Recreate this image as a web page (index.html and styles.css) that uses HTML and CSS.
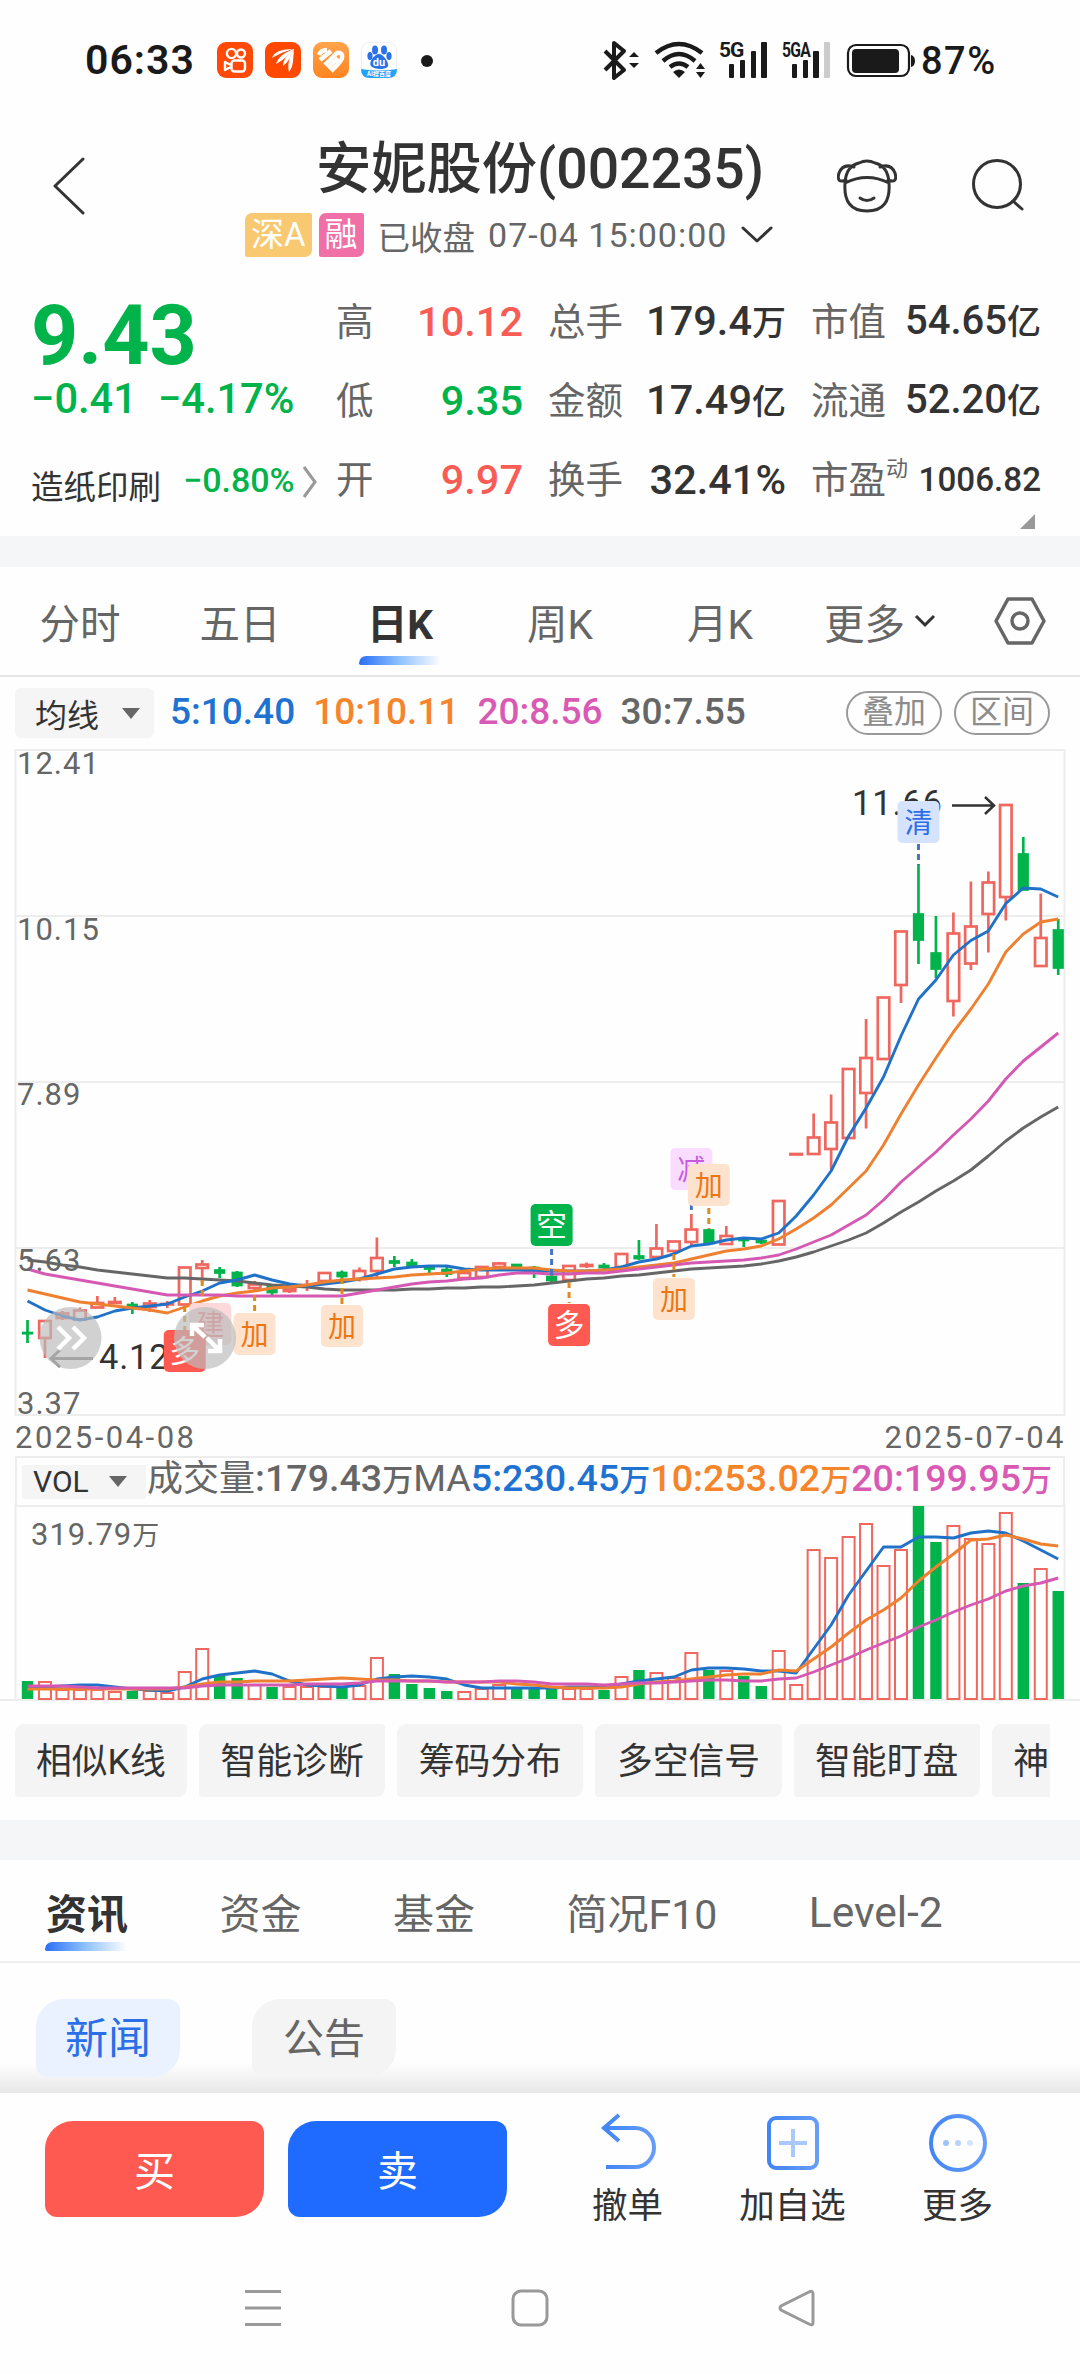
FILE: index.html
```html
<!DOCTYPE html>
<html lang="zh-CN">
<head>
    <meta charset="UTF-8">
    <meta name="viewport" content="width=device-width, initial-scale=1.0">
    <title>安妮股份(002235)</title>
    <link rel="stylesheet" href="styles.css">
</head>
<body>
    <div class="statusbar">
        <span class="time">06:33</span>
        <svg class="app" viewBox="0 0 36 36"><rect width="36" height="36" rx="9" fill="#ff4906"/><g fill="none" stroke="#fff" stroke-width="2.4"><circle cx="14.500" cy="11.500" r="4.600"/><circle cx="24" cy="11.500" r="4"/><rect x="14.500" y="18.500" width="13.500" height="11" rx="3"/><path d="M14 23l-6-3v8l6-3z" stroke-linejoin="round"/></g></svg>
        <svg class="app" viewBox="0 0 36 36"><rect width="36" height="36" rx="9" fill="#ff4800"/><g fill="#fff"><path d="M7 16C9 10 16 7 29 7C20 9 14 12 7 16z"/><path d="M11 22C13 15 20 10 29 7C23 13 20 17 11 22z"/><path d="M18 24C18 17 24 11 29 7C25 14 25 19 18 24z"/><path d="M24 30C22 22 25 13 29 7C28 15 29 24 24 30z"/></g></svg>
        <svg class="app" viewBox="0 0 36 36"><defs><linearGradient id="heart" x2="0" y2="1"><stop stop-color="#ffa44c"/><stop offset="1" stop-color="#ff8420"/></linearGradient></defs><rect width="36" height="36" rx="9" fill="url(#heart)"/><g fill="none" stroke="#fff" stroke-width="4.500"><path d="M6 13q2-5 8-5"/><path d="M7 18L18 9"/><path d="M12 23L24 11q6-1 5 5q-1 4-11 13"/><path d="M15 26l10-10"/></g></svg>
        <svg class="app" viewBox="0 0 36 36"><rect x=".5" y=".5" width="35" height="35" rx="8" fill="#fff" stroke="#eee"/><g fill="#2972e8"><ellipse cx="14" cy="8" rx="3" ry="4.500"/><ellipse cx="23" cy="8" rx="3" ry="4.500"/><ellipse cx="9" cy="14" rx="2.600" ry="4"/><ellipse cx="28" cy="14" rx="2.600" ry="4"/><path d="M18 12c4 0 10 8 9 12s-14 4-17 0s4-12 8-12z"/></g><path d="M0 27q18 3 36 0q0 9-9 9H9q-9 0-9-9z" fill="#21a2fb"/><text x="18" y="24" class="du">du</text><text x="18" y="34" class="ai">AI搜百度</text></svg>
        <i class="dot"></i>
        <svg class="signals" viewBox="600 30 410 60" width="410" height="60">
            <path d="M605 51l19 19-10 8V43l10 8-19 19" class="line"/>
            <path d="M629 57l5-5 5 5zM629 63l5 5 5-5zM696 69l4.500-6 4.500 6zM696 72l4.500 6 4.500-6z"/>
            <g class="arc"><path d="M656 53q23-18 46 0"/><path d="M663 61q16-14 32 0"/><path d="M670 67q9-7 18 0"/></g>
            <path d="M673 72q6-5 12 0l-6 6z"/>
            <text x="719" y="57" class="net">5G</text><text x="782" y="57" class="net" textLength="28" lengthAdjust="spacingAndGlyphs">5GA</text>
            <rect x="729" y="64" width="5" height="14" rx="1"/><rect x="740" y="60" width="5" height="18" rx="1"/><rect x="751" y="51" width="5" height="27" rx="1"/><rect x="761" y="42" width="6" height="36" rx="1"/>
            <rect x="792" y="64" width="5" height="14" rx="1"/><rect x="803" y="60" width="5" height="18" rx="1"/><rect x="813" y="51" width="6" height="27" rx="1"/><rect x="824" y="42" width="6" height="36" rx="1" fill="#ccc"/>
            <rect x="848" y="45" width="61" height="31" rx="8" fill="none" stroke="#1a1a1a" stroke-width="2.200"/><rect x="852" y="49" width="47" height="24" rx="4"/><path d="M911 55q4 1 4 6t-4 6z"/>
            <text x="921" y="74" class="percent">87%</text>
        </svg>
    </div>

    <div class="header">
        <svg class="back" width="32" height="58" viewBox="0 0 32 58"><path d="M30 2L2 29l28 27"/></svg>
        <div class="heading">
            <h1>安妮股份(002235)</h1>
            <div class="subtitle">
                <span class="badge">深A</span><span class="badge pink">融</span>
                <span class="closed">已收盘</span><span class="stamp">07-04 15:00:00</span>
                <svg width="32" height="18" viewBox="0 0 32 18"><path d="M2 2l14 13L30 2"/></svg>
            </div>
        </div>
        <div class="actions">
            <svg width="60" height="56" viewBox="0 0 60 56"><path d="M8 25Q30 14 52 25Q54 53 30 53Q6 53 8 25zM8 25Q9 8 22 5Q30 1 38 5Q51 8 52 25M9 22Q-1 26 2 15Q6 5 17 9M51 22Q61 26 58 15Q54 5 43 9M23 40q7 5 14 0"/></svg>
            <svg width="54" height="54" viewBox="0 0 54 54"><circle cx="26" cy="26" r="23.500"/><path d="M42 43l9 8"/></svg>
        </div>
    </div>

    <div class="quote">
        <div class="now">
            <div class="price">9.43</div>
            <div class="change"><span>−0.41</span><span>−4.17%</span></div>
            <div class="sector">造纸印刷 <span>−0.80%</span><svg width="16" height="34" viewBox="0 0 16 34"><path d="M2 2l11 15L2 32"/></svg></div>
        </div>
        <dl class="stats">
            <dt>高</dt><dd class="up">10.12</dd><dt>总手</dt><dd>179.4<small>万</small></dd><dt>市值</dt><dd class="cap">54.65<small>亿</small></dd>
            <dt>低</dt><dd class="down">9.35</dd><dt>金额</dt><dd>17.49<small>亿</small></dd><dt>流通</dt><dd class="cap">52.20<small>亿</small></dd>
            <dt>开</dt><dd class="up">9.97</dd><dt>换手</dt><dd>32.41%</dd><dt>市盈<sup>动</sup></dt><dd class="long">1006.82</dd>
        </dl>
        <i class="corner"></i>
    </div>

    <div class="periods">
        <span>分时</span><span>五日</span><span class="active">日K</span><span>周K</span><span>月K</span>
        <span class="more">更多<svg width="22" height="14" viewBox="0 0 22 14"><path d="M2 2l9 9 9-9"/></svg></span>
        <svg class="settings" width="52" height="48" viewBox="0 0 52 48"><path d="M14 2h24l12 22-12 22H14L2 24z"/><circle cx="26" cy="24" r="8"/></svg>
    </div>

    <div class="averages">
        <span class="select">均线<i></i></span>
        <span class="blue">5:10.40</span><span class="orange">10:10.11</span><span class="violet">20:8.56</span><span class="gray">30:7.55</span>
        <span class="pill">叠加</span><span class="pill">区间</span>
    </div>

    <svg id="kline" class="chart" viewBox="0 749 1080 667" width="1080" height="667"></svg>
    <div class="dates"><span>2025-04-08</span><span>2025-07-04</span></div>
    <div class="volume-info">
        <span class="select">VOL<i></i></span>
        <span class="gray"><b>成交量</b>:179.43<small>万</small><em>MA</em></span><span class="blue">5:230.45<small>万</small></span><span class="orange">10:253.02<small>万</small></span><span class="violet">20:199.95<small>万</small></span>
    </div>
    <svg id="volume" class="chart" viewBox="0 1505 1080 196" width="1080" height="196"></svg>

    <div class="tools">
        <span>相似K线</span><span>智能诊断</span><span>筹码分布</span><span>多空信号</span><span>智能盯盘</span><span>神奇</span>
    </div>

    <div class="sections">
        <span class="active">资讯</span><span>资金</span><span>基金</span><span>简况F10</span><span class="level">Level-2</span>
    </div>
    <div class="chips"><span class="active">新闻</span><span>公告</span></div>

    <div class="tradebar">
        <button class="buy">买</button><button class="sell">卖</button>
        <div class="action">
            <svg width="60" height="60" viewBox="0 0 60 60"><defs><linearGradient id="ink"><stop stop-color="#4285f4"/><stop offset="1" stop-color="#669df6"/></linearGradient></defs><path d="M21 2L6 15l15 13M6 15h31a19 19.500 0 0 1 0 39H8"/></svg>
            撤单
        </div>
        <div class="action">
            <svg width="60" height="60" viewBox="0 0 60 60"><rect x="6" y="5" width="48" height="50" rx="7"/><path class="pale" d="M16 30H44M30 16V44"/></svg>
            加自选
        </div>
        <div class="action">
            <svg width="60" height="60" viewBox="0 0 60 60"><circle cx="30" cy="30" r="27"/><g class="dots"><circle cx="18" cy="30" r="3" fill="#9fc1fa"/><circle cx="30" cy="30" r="3" fill="#b9d2fc"/><circle cx="42" cy="30" r="3" fill="#d5e4fd"/></g></svg>
            更多
        </div>
    </div>

    <div class="navbar">
        <svg width="38" height="38" viewBox="0 0 38 38"><path d="M1 2.500h36M1 19h36M1 35.500h36"/></svg>
        <svg width="38" height="38" viewBox="0 0 38 38"><rect x="2" y="2" width="34" height="34" rx="8"/></svg>
        <svg width="38" height="38" viewBox="0 0 38 38"><path d="M31 3L3 17q-2 2 0 4l28 14q4 2 4-1V5q0-4-4-2z"/></svg>
    </div>

    <script src="chart.js"></script>
</body>
</html>
```
FILE: styles.css
```css
* {
    box-sizing: border-box;
}
body {
    margin: 0;
    width: 1080px;
    height: 2374px;
    overflow: hidden;
    background: #fefefe;
    color: #333;
    font-family: Roboto, "Noto Sans CJK SC", sans-serif;
}
svg {
    display: block;
    flex: none;
}
i {
    display: block;
    flex: none;
}

/* status bar */
.statusbar {
    display: flex;
    align-items: center;
    height: 120px;
    padding-left: 85px;
    color: #1a1a1a;
}
.time {
    width: 132px;
    font-size: 41px;
    font-weight: 600;
    letter-spacing: 1px;
}
.app {
    width: 36px;
    height: 36px;
    margin-right: 12px;
}
.du {
    font: bold 11px Roboto;
    fill: #fff;
    text-anchor: middle;
}
.ai {
    font: bold 6px "Noto Sans CJK SC";
    fill: #fff;
    text-anchor: middle;
}
.dot {
    width: 12px;
    height: 12px;
    margin: 2px 167px 0 12px;
    border-radius: 50%;
    background: #1a1a1a;
}
.signals {
    fill: #1a1a1a;
}
.signals .line {
    fill: none;
    stroke: #1a1a1a;
    stroke-width: 4;
    stroke-linejoin: round;
}
.arc {
    fill: none;
    stroke: #1a1a1a;
    stroke-width: 4.500;
}
.net {
    font: bold 21px Roboto;
    letter-spacing: -1px;
}
.percent {
    font: 500 38px Roboto;
    letter-spacing: 1.500px;
}

/* header */
.header {
    display: grid;
    grid-template-columns: 242px 596px 242px;
    height: 158px;
}
.header svg {
    fill: none;
    stroke: #333;
    stroke-width: 3;
    stroke-linecap: round;
    stroke-linejoin: round;
}
.back {
    margin: 37px 0 0 53px;
}
.heading {
    display: flex;
    flex-direction: column;
    align-items: center;
}
h1 {
    margin: 14px 0 0;
    font-size: 55.300px;
    font-weight: 500;
    line-height: 72px;
}
.subtitle {
    display: flex;
    align-items: center;
    align-self: flex-start;
    height: 44px;
    margin: 7px 0 0 3px;
    font-size: 34px;
    color: #666;
    white-space: nowrap;
}
.badge {
    height: 44px;
    margin-right: 7px;
    padding: 0 6px;
    border-radius: 7px 2px 7px 2px;
    background: #f8c970;
    color: #fff;
    font-size: 33px;
    line-height: 44px;
}
.badge.pink {
    margin-right: 14px;
    background: #f06fa6;
}
.closed {
    margin-right: 13px;
    font-size: 32.500px;
}
.stamp {
    margin-right: 14px;
    letter-spacing: 1px;
}
.actions {
    display: flex;
    gap: 74px;
    margin-left: -1px;
    padding: 38px 0 0;
}

/* quote */
.quote {
    position: relative;
    display: flex;
    height: 289px;
    padding-top: 4px;
    border-bottom: 31px solid #f5f6f8;
    color: #00b34a;
}
.now {
    width: 336px;
    padding-left: 31px;
}
.price {
    margin-top: 5px;
    font-size: 82.500px;
    font-weight: 700;
    line-height: 98px;
}
.change {
    display: flex;
    gap: 21px;
    margin-top: -11px;
    font-size: 41.600px;
    font-weight: 500;
    line-height: 50px;
}
.sector {
    display: flex;
    align-items: center;
    height: 60px;
    margin-top: 30px;
    color: #333;
    font-size: 32.500px;
    white-space: nowrap;
}
.sector span {
    margin: -8px 7px 0 22px;
    color: #00b34a;
    font-size: 34px;
    font-weight: 500;
}
.sector svg {
    margin-top: -5px;
    fill: none;
    stroke: #999;
    stroke-width: 3;
}
.stats {
    display: grid;
    grid-template-columns: 62px 125px 100px 163px 102px 153px;
    grid-auto-rows: 79px;
    align-items: center;
    margin: 0;
    white-space: nowrap;
}
dt {
    color: #666;
    font-size: 37.500px;
    line-height: 60px;
}
dt:nth-of-type(3n+2), dt:nth-of-type(3n) {
    padding-left: 25px;
}
dd {
    margin: 0;
    color: #333;
    font-size: 41.500px;
    font-weight: 500;
    line-height: 60px;
    text-align: right;
}
dd small {
    font-size: 34px;
}
dt sup {
    font-size: 22px;
    line-height: 0;
    vertical-align: 17px;
}
.cap {
    font-size: 40px;
}
.long {
    font-size: 33.200px;
}
.up {
    color: #f95b55;
}
.down {
    color: #00b34a;
}
.corner {
    position: absolute;
    right: 45px;
    bottom: 7px;
    border-bottom: 15px solid #999;
    border-left: 15px solid transparent;
}

/* period tabs */
.periods {
    display: flex;
    align-items: center;
    height: 110px;
    border-bottom: 2px solid #e6e6e6;
    color: #666;
    font-size: 40.500px;
}
.periods > span {
    position: relative;
    width: 160px;
    text-align: center;
}
.periods > .more {
    display: flex;
    align-items: center;
    gap: 9px;
    width: 170px;
    padding-left: 24px;
}
.more svg {
    fill: none;
    stroke: #333;
    stroke-width: 3;
}
.settings {
    margin-left: 24px;
    fill: none;
    stroke: #666;
    stroke-width: 3.500;
    stroke-linejoin: round;
}
.periods .active, .sections .active {
    color: #333;
    font-weight: 700;
}
.periods .active::after, .sections .active::after {
    content: "";
    position: absolute;
    bottom: -14px;
    left: 39px;
    width: 82px;
    height: 9px;
    border-radius: 8px 0 0 2px;
    background: linear-gradient(90deg, #2a6ff5, #8fc3ff 50%, #fefefe);
}

/* moving averages */
.averages {
    display: flex;
    align-items: center;
    height: 72px;
    padding-left: 15px;
    font-size: 37px;
    font-weight: 500;
    white-space: nowrap;
}
.averages > span:not(.pill):not(.select) {
    margin: -4px 18px 0 0;
}
.select {
    display: flex;
    flex: none;
    align-items: center;
    justify-content: space-between;
    width: 139px;
    height: 50px;
    margin-right: 16px;
    padding: 0 14px 0 20px;
    border-radius: 6px;
    background: #f5f5f5;
    color: #333;
    font-size: 32px;
    font-weight: 400;
}
.select i {
    border: 9px solid transparent;
    border-top: 11px solid #666;
    border-bottom: 0;
}
.blue {
    color: #2072d2;
}
.orange {
    color: #f5842a;
}
.violet {
    color: #d95ab4;
}
.gray {
    color: #666;
}
.pill {
    width: 96px;
    height: 44px;
    margin-left: 12px;
    border: 2px solid #999;
    border-radius: 22px;
    color: #8c8c8c;
    font-size: 32px;
    font-weight: 400;
    line-height: 39px;
    text-align: center;
}
.gray + .pill {
    margin-left: auto;
}
.pill:last-child {
    margin-right: 30px;
}

/* charts */
.chart .grid {
    fill: none;
    stroke: #ededed;
    stroke-width: 2;
}
.chart .rise {
    fill: #fefefe;
    stroke: #ef675f;
    stroke-width: 2.700;
}
.chart .fall {
    fill: #00b34a;
    stroke: #00b34a;
    stroke-width: 2.700;
}
#volume .rise {
    stroke-width: 2;
}
#volume .fall {
    stroke: none;
}
.chart polyline {
    fill: none;
    stroke-width: 2.900;
    stroke-linejoin: round;
}
.chart .axis {
    fill: #666;
    font-size: 31px;
    letter-spacing: 1px;
}
.chart .extreme {
    fill: #333;
    font-size: 34.500px;
    letter-spacing: .8px;
}
.chart .tag {
    font-size: 28px;
    text-anchor: middle;
}
.chart .unit {
    font-size: 27px;
}
.dates {
    display: flex;
    justify-content: space-between;
    height: 40px;
    padding: 2px 14px 4px 15px;
    color: #666;
    font-size: 31px;
    letter-spacing: 2.500px;
    line-height: 40px;
}
.volume-info {
    display: flex;
    align-items: center;
    height: 49px;
    margin: 0 15px;
    border: 2px solid #ededed;
    border-bottom: 0;
    font-size: 37.600px;
    font-weight: 500;
    line-height: 44px;
    white-space: nowrap;
}
.volume-info > span {
    margin-top: -4px;
}
.volume-info .select {
    width: 124px;
    height: 34px;
    margin: 0 1px 0 5px;
    padding: 0 19px 0 11px;
    border-radius: 0;
    font-size: 30px;
}
.volume-info b {
    font-size: 36px;
    font-weight: 400;
}
.volume-info em {
    font-style: normal;
    font-weight: 400;
}
.volume-info small {
    font-size: 31px;
}

/* tools */
.tools {
    display: flex;
    gap: 12px;
    height: 160px;
    margin-right: 30px;
    padding: 23px 0 0 15px;
    overflow: hidden;
    background: #fefefe;
}
.tools span {
    flex: none;
    height: 73px;
    padding: 0 21.500px;
    border-radius: 9px 4px 9px 4px;
    background: #f4f4f4;
    font-size: 35.800px;
    line-height: 76px;
    white-space: nowrap;
}
.tools span:first-child {
    width: 172px;
    padding: 0 0 0 21px;
}

/* info sections */
.sections {
    display: flex;
    align-items: center;
    gap: 91.500px;
    height: 143px;
    margin-top: -41px;
    padding-left: 46px;
    border-top: 40px solid #f5f6f8;
    border-bottom: 2px solid #eee;
    color: #666;
    font-size: 41px;
}
.sections span {
    position: relative;
    margin-top: 1px;
}
.sections .level {
    margin-top: 4px;
    font-size: 42.500px;
}
.sections .active::after {
    bottom: -10px;
    left: -1px;
}
.chips {
    display: flex;
    gap: 72px;
    height: 130px;
    padding: 36px;
    background: linear-gradient(#fefefe 100px, #e8e8e8);
}
.chips span {
    width: 144px;
    height: 78px;
    border-radius: 28px 12px;
    background: #f4f4f4;
    color: #666;
    font-size: 41px;
    line-height: 81px;
    text-align: center;
}
.chips .active {
    background: #eaf2ff;
    color: #2a6ee8;
    font-size: 43px;
}

/* bottom bars */
.tradebar {
    position: relative;
    display: flex;
    height: 150px;
    padding: 28px 0 0 45px;
    background: #fefefe;
}
button {
    width: 219px;
    height: 96px;
    margin-right: 24px;
    padding: 0 0 2px;
    border: 0;
    border-radius: 28px 12px;
    color: #fff;
    font: 41px Roboto, "Noto Sans CJK SC";
}
.buy {
    background: #ff5a52;
}
.sell {
    margin-right: 38px;
    background: #1f6bff;
}
.action {
    display: flex;
    flex-direction: column;
    align-items: center;
    width: 165px;
    margin-top: -8px;
    font-size: 35.500px;
    line-height: 66px;
    color: #333;
    white-space: nowrap;
}
.action svg {
    fill: none;
    stroke: url(#ink);
    stroke-width: 4;
}
.action .pale {
    stroke: #a9c8fb;
}
.action .dots {
    stroke: none;
}
.navbar {
    display: flex;
    justify-content: space-between;
    padding: 46px 264px 0 244px;
}
.navbar svg {
    fill: none;
    stroke: #999;
    stroke-width: 3;
}
```
FILE: chart.js
```js
// x of the first day and the distance between two days
const START = 27.5;
const STEP = 17.47;
const x = i => START + STEP * i;

// direction, body top, body bottom, high, low
const candles = [
    ['g', 1333, 1333.2, 1320, 1343], ['r', 1321, 1338, 1320, 1358], ['r', 1313.5, 1318, 1311, 1320], ['r', 1310.5, 1319.5, 1307.5, 1320],
    ['r', 1303, 1307.5, 1296, 1308], ['r', 1302, 1303, 1297, 1304], ['g', 1305, 1306.5, 1302, 1314], ['r', 1303.5, 1307, 1300, 1312],
    ['r', 1304, 1304.5, 1301, 1308], ['r', 1267.5, 1304.5, 1267, 1305], ['r', 1264.5, 1268, 1260, 1283], ['g', 1270.5, 1272.5, 1267, 1278],
    ['g', 1273, 1285, 1271, 1287], ['r', 1284.5, 1288, 1281, 1290], ['g', 1286, 1292, 1284, 1295], ['r', 1289, 1291, 1283, 1293],
    ['r', 1285, 1285.5, 1280, 1291], ['r', 1273, 1281, 1272, 1282], ['g', 1273, 1276, 1270.5, 1280], ['r', 1271, 1279, 1267.5, 1281.5],
    ['r', 1258, 1271, 1237.5, 1277], ['g', 1261.5, 1262.5, 1256, 1267], ['g', 1263, 1266, 1259, 1268], ['g', 1267.5, 1268.5, 1265, 1273],
    ['g', 1270, 1273.5, 1267, 1277], ['r', 1273, 1278, 1272, 1279], ['r', 1267, 1277, 1266, 1278], ['r', 1263.5, 1267, 1262, 1268],
    ['g', 1265, 1267, 1264, 1268], ['g', 1268, 1272, 1266, 1278], ['g', 1277, 1280, 1275, 1282], ['r', 1266, 1280, 1265, 1281],
    ['r', 1265, 1266, 1262.5, 1268], ['g', 1266, 1267, 1263, 1270], ['r', 1254, 1267, 1253, 1267], ['g', 1256.5, 1258, 1240, 1260],
    ['r', 1248.5, 1257, 1224, 1258], ['r', 1241.5, 1251, 1241, 1254], ['r', 1229.5, 1242, 1214, 1246], ['g', 1230.5, 1243, 1229, 1244],
    ['r', 1236, 1244, 1226, 1245], ['g', 1239, 1240, 1237, 1247], ['g', 1241, 1242, 1238, 1244], ['r', 1201, 1244.5, 1201, 1244],
    ['r', 1154, 1154.5, 1154, 1155], ['r', 1137.5, 1154, 1113.5, 1154], ['r', 1122.5, 1149, 1094.5, 1169.5], ['r', 1069, 1138, 1069, 1138],
    ['r', 1058, 1093, 1019, 1128.5], ['r', 997.5, 1059, 997, 1059], ['r', 931.5, 985, 931, 1003], ['g', 914.5, 939.5, 865, 964],
    ['g', 953.5, 968.5, 916, 978], ['r', 933.5, 1001, 912.5, 1016.5], ['r', 926.5, 963.5, 881.5, 970], ['r', 882.5, 914, 871.5, 952.5],
    ['r', 805, 897, 805, 920.5], ['g', 854.5, 889.5, 837, 890], ['r', 938, 966, 893.5, 966], ['g', 930.5, 967.5, 919, 975]
];

const priceLines = {
    '#666': [1260,1262,1265,1267,1270,1272,1274,1276,1278,1278,1279,1280,1281,1283,1285,1286,1287,1289,1290,1290,1290,1290,1289,1289,1288,1288,1287,1287,1286,1285,1283,1281,1279,1278,1276,1275,1273,1271,1269,1268,1267,1266,1264,1261,1257,1252,1246,1240,1233,1223,1212,1202,1191,1181,1170,1156,1141,1128,1117,1107],
    '#2072c8': [1301,1310,1316,1320,1317,1311,1308,1306,1304,1297,1291,1283,1280,1275,1280,1284,1286,1284,1282,1279,1274,1269,1267,1266,1266,1269,1270,1270,1270,1271,1271,1271,1271,1270,1267,1262,1259,1254,1246,1244,1240,1238,1239,1233,1216,1195,1171,1136,1108,1077,1036,999,980,955,940.5,931,903.5,888,889,897],
    '#ee8030': [1290,1294,1298,1302,1304,1306,1308,1310,1313,1307,1301,1296,1293,1291,1288,1287,1285,1282,1280,1279,1278,1277,1275,1274,1273,1271,1269,1268,1268,1268,1270,1271,1271,1270,1269,1267,1265,1263,1259,1255,1251,1249,1246,1239,1229,1218,1205,1188,1171,1145,1114,1085,1058,1032,1009,984,952,934,922,919],
    '#d558b2': [1269,1274,1277,1280,1283,1286,1289,1292,1295,1295,1295,1295,1296,1296,1296,1296,1296,1296,1296,1293,1290,1287,1284,1282,1281,1279,1278,1275,1273,1273,1274,1274,1273,1273,1271,1269,1267,1265,1263,1262,1261,1260,1258,1255,1249,1242,1235,1225,1215,1200,1182,1167,1152,1135,1119,1101,1079,1061,1047,1033]
};

// top of every volume bar
const volumes = [1681,1682,1690,1690,1690,1692,1691,1691,1693,1672,1649,1675,1678,1685,1687,1687,1687,1687,1687,1686,1658,1674,1684,1688,1691,1692,1689,1685,1689,1689,1689,1689,1689,1690,1677,1670,1673,1678,1653,1670,1671,1676,1686,1651,1685,1550,1558,1537,1524,1566,1550,1506,1542,1526,1539,1544,1513,1583,1569,1591];

const volumeLines = {
    '#2072c8': [1687,1687,1686,1685,1685,1687,1689,1690,1691,1687,1679,1675,1673,1671,1674,1681,1685,1686,1687,1685,1679,1677,1676,1677,1679,1685,1688,1688,1688,1688,1688,1687,1687,1687,1684,1681,1679,1677,1670,1668,1668,1669,1671,1671,1673,1649,1625,1595,1571,1547,1547,1537,1537,1538,1533,1531,1533,1541,1550,1559],
    '#ee8030': [1689,1689,1689,1689,1689,1689,1689,1689,1689,1687,1684,1682,1682,1681,1681,1681,1680,1679,1678,1679,1680,1680,1681,1681,1682,1682,1682,1682,1684,1685,1687,1688,1688,1688,1687,1684,1682,1681,1679,1677,1675,1674,1674,1670,1671,1659,1647,1633,1620,1610,1598,1581,1567,1554,1540,1539,1535,1539,1544,1546],
    '#d558b2': [1686,1686,1686,1687,1688,1688,1688,1688,1688,1688,1686,1685,1685,1685,1685,1685,1684,1684,1684,1683,1681,1681,1681,1681,1682,1682,1682,1681,1681,1682,1684,1684,1684,1685,1684,1683,1683,1682,1681,1680,1680,1681,1681,1679,1678,1672,1665,1658,1650,1643,1636,1627,1620,1612,1605,1599,1591,1586,1583,1578]
};

// day, label, top of the box, dash from, dash to, box colour, text colour, dash colour, shift
const tags = [
    [10, '建', 1303, 1280, 1300, '#fbd8da', '#f4737a', '#e08a20', 8],
    [9, '多', 1330, 1306, 1330, '#ff5a52', '#fff', '#e08a20', 0],
    [13, '加', 1313, 1295, 1312, '#fde3cd', '#ed7614', '#e08a20', 0],
    [18, '加', 1305, 1278, 1304, '#fde3cd', '#ed7614', '#e08a20', 0],
    [30, '空', 1204, 1249, 1275, '#00b34a', '#fff', '#4674c4', 0],
    [31, '多', 1304, 1282, 1303, '#ff5a52', '#fff', '#e08a20', 0],
    [37, '加', 1278, 1254, 1277, '#fde3cd', '#ed7614', '#e08a20', 0],
    [38, '减', 1148, 1204, 1213, '#f9dcff', '#c65bdc', '#4674c4', 0],
    [39, '加', 1164, 1208, 1229, '#fde3cd', '#ed7614', '#e08a20', 0],
    [51, '清', 801, 844, 865, '#d6e3ff', '#2b6ee6', '#4674c4', 0]
];

function lines(series) {
    let out = '';
    for (const color in series) {
        const points = series[color].map((y, i) => `${x(i).toFixed(1)},${y}`).join(' ');
        out += `<polyline points="${points}" stroke="${color}"/>`;
    }
    return out;
}

function drawKline() {
    let out = '<path class="grid" d="M15.500 750H1064.500V1415H15.500zM15 916H1064M15 1082H1064M15 1248H1064"/>';
    candles.forEach(([dir, top, bottom, high, low], i) => {
        const cls = dir === 'r' ? 'rise' : 'fall';
        const w = dir === 'r' ? 11.5 : 8.5;
        out += `<path class="${cls}" d="M${x(i)} ${high}V${low}"/>`;
        out += `<rect class="${cls}" x="${x(i) - w / 2}" y="${top}" width="${w}" height="${bottom - top}"/>`;
    });
    out += lines(priceLines);
    [['12.41', 774], ['10.15', 940], ['7.89', 1105], ['5.63', 1271], ['3.37', 1414]].forEach(([text, y]) => {
        out += `<text class="axis" x="17" y="${y}">${text}</text>`;
    });
    out += '<text class="extreme" x="99" y="1369">4.12</text><path d="M93 1358.500H51M60 1350l-9 8.500 9 8.500" fill="none" stroke="#777" stroke-width="3"/>';
    out += '<text class="extreme" x="852" y="815">11.66</text><path d="M952 805.500H994M985 797l9 8.500-9 8.500" fill="none" stroke="#333" stroke-width="2.500"/>';
    tags.forEach(([day, text, top, from, to, box, ink, dash, shift]) => {
        const cx = x(day);
        const size = ink === '#fff' ? 31 : 28;
        out += `<path d="M${cx} ${from}V${to}" stroke="${dash}" stroke-width="3" stroke-dasharray="6 4"/>`;
        out += `<rect x="${cx + shift - 21}" y="${top}" width="42" height="42" rx="5" fill="${box}"/>`;
        out += `<text class="tag" x="${cx + shift}" y="${top + 32}" fill="${ink}" style="font-size:${size}px">${text}</text>`;
    });
    // floating buttons in the lower left corner
    out += '<g fill="#bbb" fill-opacity=".68"><circle cx="70.500" cy="1338" r="31"/><circle cx="205" cy="1338" r="31"/></g>';
    out += '<g fill="none" stroke="#fff" stroke-width="4.500"><path d="M58 1327l11 11-11 11M73 1327l11 11-11 11"/><path d="M192 1336v-11h12M193 1326l12 11M220 1339v12h-12M219 1350l-12-12"/></g>';
    document.getElementById('kline').innerHTML = out;
}

function drawVolume() {
    let out = '<path class="grid" d="M15.500 1700V1506H1064.500V1700M0 1700H1080"/>';
    volumes.forEach((top, i) => {
        if (candles[i][0] === 'r') {
            out += `<rect class="rise" x="${x(i) - 6}" y="${top}" width="12" height="${1699 - top}"/>`;
        } else {
            out += `<rect class="fall" x="${x(i) - 5.7}" y="${top}" width="11.400" height="${1699 - top}"/>`;
        }
    });
    out += lines(volumeLines);
    out += '<text class="axis" x="31" y="1545">319.79<tspan class="unit">万</tspan></text>';
    document.getElementById('volume').innerHTML = out;
}

drawKline();
drawVolume();
```
